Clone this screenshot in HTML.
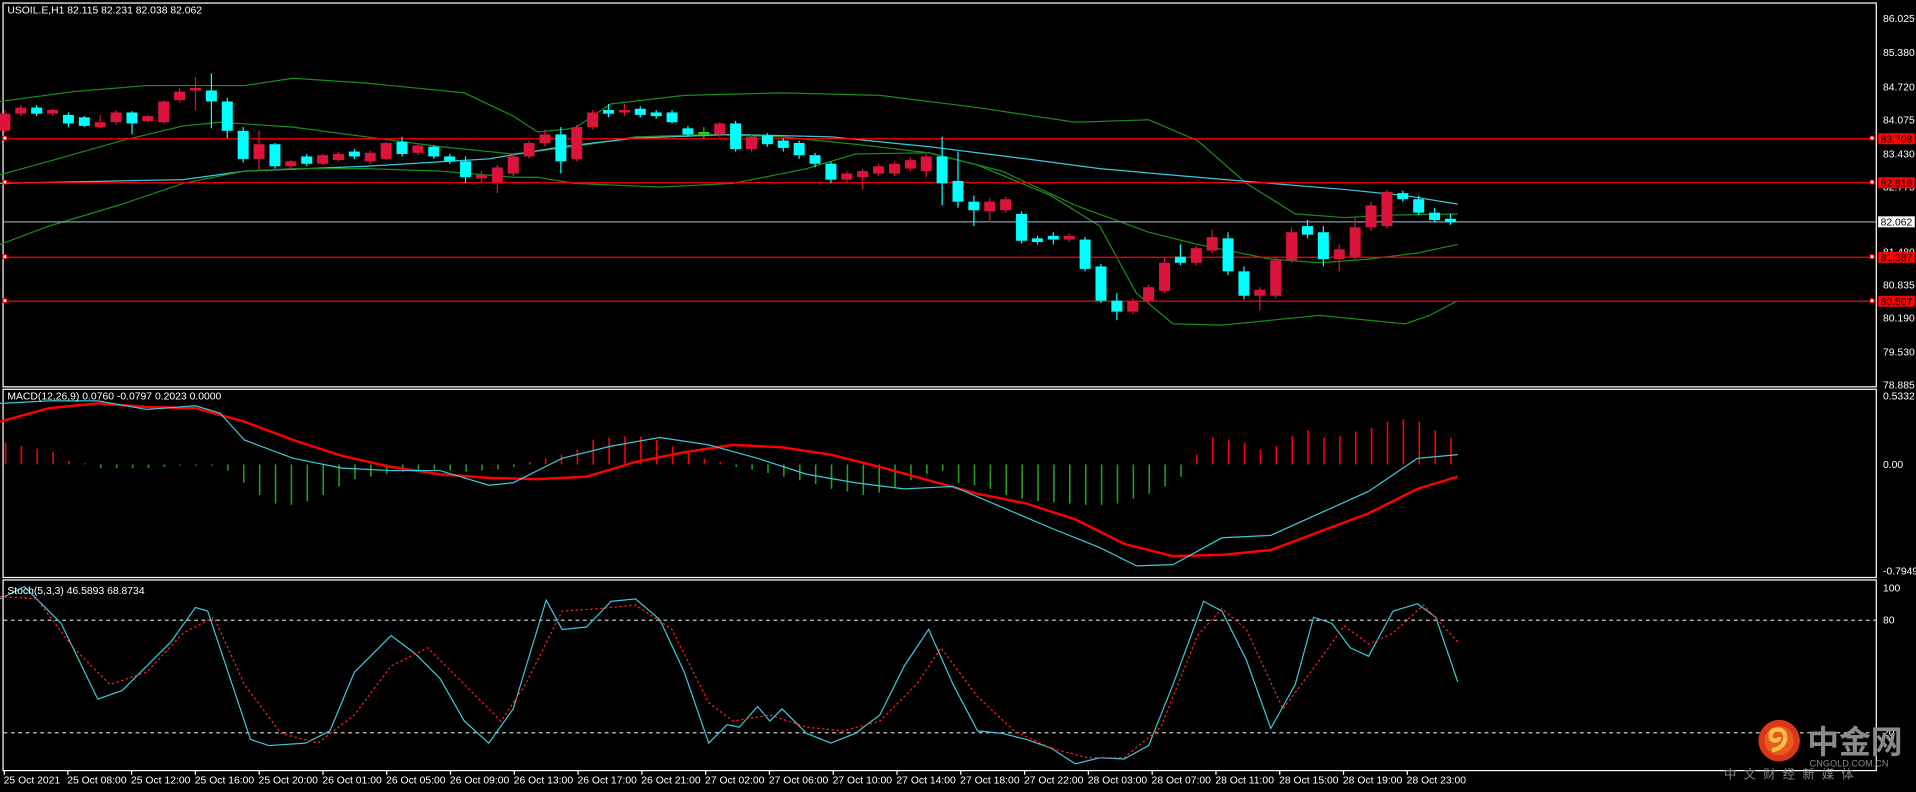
<!DOCTYPE html>
<html><head><meta charset="utf-8"><style>
html,body{margin:0;padding:0;background:#000;overflow:hidden}
svg{display:block}
text{font-family:"Liberation Sans",sans-serif;fill:#fff;font-size:8.5px}
</style></head><body>
<svg id="s" width="1916" height="792" viewBox="0 0 1568 648" preserveAspectRatio="none" xmlns="http://www.w3.org/2000/svg">
<rect width="1568" height="648" fill="#000"/>
<g fill="none" stroke="#fff" stroke-width="1">
<rect x="2.5" y="2.5" width="1533" height="314"/>
<rect x="2.5" y="318.5" width="1533" height="154"/>
<rect x="2.5" y="474.5" width="1533" height="156"/>
</g>
<g id="bands" fill="none" stroke-width="1"></g>
<g id="hl"></g>
<g id="candles"></g>
<g id="macd"></g>
<g id="stoch"></g>
<text x="6" y="11">USOIL.E,H1  82.115 82.231 82.038 82.062</text>
<g>
<text x="1541" y="18">86.025</text><text x="1541" y="46">85.380</text><text x="1541" y="74">84.720</text>
<text x="1541" y="101">84.075</text><text x="1541" y="129">83.430</text><text x="1541" y="156">82.775</text>
<text x="1541" y="183">82.125</text><text x="1541" y="209">81.480</text><text x="1541" y="236">80.835</text>
<text x="1541" y="263">80.190</text><text x="1541" y="291">79.530</text><text x="1541" y="318">78.885</text>
<rect x="1537" y="109" width="30" height="9" fill="#f00"/><text x="1539" y="116.5" style="fill:#000">83.708</text>
<rect x="1537" y="145" width="30" height="9" fill="#f00"/><text x="1539" y="152.5" style="fill:#000">82.816</text>
<rect x="1537" y="177" width="30" height="9" fill="#fff"/><text x="1539" y="184.5" style="fill:#000">82.062</text>
<rect x="1537" y="206" width="30" height="9" fill="#f00"/><text x="1539" y="213.5" style="fill:#000">81.387</text>
<rect x="1537" y="242" width="30" height="9" fill="#f00"/><text x="1539" y="249.5" style="fill:#000">80.507</text>
<text x="6" y="327">MACD(12,26,9) 0.0760 -0.0797 0.2023 0.0000</text>
<text x="1541" y="327">0.5332</text><text x="1541" y="383">0.00</text><text x="1541" y="470">-0.7949</text>
<text x="6" y="486">Stoch(5,3,3) 46.5893 68.8734</text>
<text x="1541" y="484">100</text><text x="1541" y="510">80</text><text x="1541" y="602">20</text>
</g>
<g id="time"></g>
<g>
<circle cx="1456" cy="606" r="17" fill="#d9361a"/>
<circle cx="1456" cy="606" r="12" fill="#e85a1e"/>
<path d="M1450 614 q10 -2 11 -10 q0 -7 -6 -7 q-6 0 -6 5 q0 4 4 4 q3 0 3 -3" fill="none" stroke="#f5c04a" stroke-width="3.5"/>
<text x="1479" y="616" style="font-family:'Noto Sans CJK SC',sans-serif;font-size:26px;font-weight:bold;fill:#8a8a8a">中金网</text>
<text x="1481" y="627" style="font-size:7.5px;fill:#8a8a8a">CNGOLD.COM.CN</text>
<text x="1411" y="637" style="font-family:'Noto Sans CJK SC',sans-serif;font-size:10px;fill:#8a8a8a;letter-spacing:6px">中文财经新媒体</text>
</g>
</svg>
<script>
var NS="http://www.w3.org/2000/svg";
function el(p,t,a){var e=document.createElementNS(NS,t);for(var k in a)e.setAttribute(k,a[k]);document.getElementById(p).appendChild(e);return e;}
function pl(p,pts,c,extra){var a={points:pts.map(function(q){return q.join(',')}).join(' '),fill:'none',stroke:c,'stroke-width':1};for(var k in extra)a[k]=extra[k];el(p,'polyline',a);}
// bands
pl('bands',[[0,83],[60,75],[120,70],[200,70],[240,64],[300,68],[380,76],[420,95],[440,108],[470,105],[500,85],[560,78],[640,76],[720,78],[800,88],[880,100],[940,98],[980,115],[1020,150],[1060,175],[1100,178],[1140,176],[1193,175]],'#1a8c1a');
pl('bands',[[0,143],[40,132],[100,115],[150,103],[180,100],[240,104],[300,112],[360,120],[420,126],[470,120],[520,112],[580,110],[640,112],[700,118],[760,125],[820,140],[880,168],[940,190],[980,200],[1040,212],[1080,215],[1120,212],[1160,207],[1193,200]],'#1a8c1a');
pl('bands',[[0,150],[150,147],[200,140],[300,136],[400,130],[460,120],[520,113],[600,110],[680,112],[760,120],[840,130],[900,138],[980,145],[1040,150],[1100,155],[1150,160],[1193,167]],'#3cc8d8');
pl('bands',[[0,200],[40,185],[100,167],[150,150],[200,140],[240,138],[300,138],[360,140],[420,145],[440,145],[470,150],[540,153],[600,150],[660,138],[700,126],[760,125],[800,135],[860,160],[900,185],[930,240],[960,265],[1000,266],[1080,258],[1120,262],[1150,265],[1170,258],[1193,246]],'#1a8c1a');
// horizontal lines
[[113,'#f00'],[149,'#f00'],[210,'#f00'],[246,'#f00'],[181,'#8899aa']].forEach(function(h){
el('hl','line',{x1:3,x2:1535,y1:h[0]+.5,y2:h[0]+.5,stroke:h[1],'stroke-width':1});
if(h[1]=='#f00'){el('hl','rect',{x:2.5,y:h[0]-1.5,width:3,height:3,fill:'#fff',stroke:'#f00','stroke-width':.8});el('hl','rect',{x:1530.5,y:h[0]-1.5,width:3,height:3,fill:'#fff',stroke:'#f00','stroke-width':.8});}
});
// candles [x,top,bot,wt,wb,c]
var R='#dc143c',C='#00ffff';
var cd=[[4,93,107,90,108,R],[17,88,93,86,95,R],[30,88,93,86,95,C],[43,90,93,89,95,R],[56,94,101,92,104,C],[69,96,103,95,104,C],[82,100,104,94,105,R],[95,92,100,90,102,R],[108,92,101,91,110,C],[121,95,99,94,100,R],[134,83,100,82,101,R],[147,75,82,72,84,R],[160,72,74,63,90,R],[173,74,83,60,105,C],[186,83,107,80,113,C],[199,107,130,104,133,C],[212,118,130,107,139,R],[225,118,136,117,138,C],[238,132,136,131,138,R],[251,128,134,126,136,C],[264,127,134,126,135,R],[277,126,131,124,132,R],[290,124,128,122,130,C],[303,125,132,123,134,R],[316,117,130,116,131,R],[329,116,126,112,128,C],[342,119,125,118,127,R],[355,120,128,119,130,C],[368,128,132,126,134,C],[381,132,145,128,150,C],[394,143,146,140,150,R],[407,137,149,135,158,R],[420,128,142,126,144,R],[433,117,128,115,130,R],[446,110,117,106,120,R],[459,110,132,104,142,C],[472,104,130,102,132,R],[485,92,104,90,106,R],[498,90,93,85,96,C],[511,90,92,85,95,R],[524,89,94,87,96,C],[537,92,95,90,97,C],[550,92,100,90,101,C],[563,105,110,103,112,C],[576,108,110,104,113,'#22cc22'],[589,101,110,100,112,R],[602,101,122,99,124,C],[615,112,122,110,124,R],[628,111,118,109,120,C],[641,115,121,113,124,C],[654,117,127,115,130,C],[667,127,134,125,137,C],[680,134,147,132,150,C],[693,142,147,140,150,R],[706,140,145,138,155,R],[719,136,142,134,144,R],[732,134,142,132,144,R],[745,131,138,129,140,R],[758,128,140,126,145,R],[771,128,150,112,168,C],[784,148,165,124,170,C],[797,165,172,160,185,C],[810,165,173,162,182,R],[823,163,172,161,174,R],[836,175,197,173,199,C],[849,195,198,193,200,C],[862,193,196,190,200,C],[875,193,196,191,198,R],[888,196,220,194,222,C],[901,218,246,216,248,C],[914,246,255,240,262,C],[927,246,255,244,257,R],[940,235,246,233,248,R],[953,215,238,210,240,R],[966,210,215,200,217,C],[979,203,215,201,217,R],[992,194,205,188,207,R],[1005,195,222,190,225,C],[1018,222,242,218,245,C],[1031,237,242,235,254,R],[1044,213,242,211,244,R],[1057,190,213,186,215,R],[1070,185,192,180,195,C],[1083,190,212,185,218,C],[1096,204,212,200,222,R],[1109,186,210,178,212,R],[1122,168,186,165,189,R],[1135,157,185,155,187,R],[1148,158,163,156,165,C],[1161,163,174,160,176,C],[1174,174,180,170,182,C],[1187,179,182,175,184,C]];
cd.forEach(function(c){el('candles','line',{x1:c[0],x2:c[0],y1:c[3],y2:c[4],stroke:c[5],'stroke-width':1});el('candles','rect',{x:c[0]-4.5,y:c[1],width:9,height:Math.max(1,c[2]-c[1]),fill:c[5]});});
// macd histogram
var hv={4:362,17:365,30:367,43:370,56:377,69:379,82:383,95:383,108:383,121:383,134:382,147:381,160:381,173:381,186:385,199:395,212:405,225:412,238:413,251:410,264:405,277:398,290:392,303:390,316:388,329:386,342:385,355:384,368:385,381:386,394:385,407:384,420:382,433:378,446:375,459:372,472:368,485:360,498:358,511:357,524:357,537:360,550:365,563:370,576:375,589:378,602:382,615:384,628:387,641:390,654:393,667:396,680:400,693:402,706:405,719:403,732:399,745:393,758:388,771:385,784:395,797:397,810:400,823:405,836:408,849:410,862:411,875:412,888:413,901:413,914:412,927:408,940:404,953:398,966:390,979:372,992:358,1005:360,1018:362,1031:368,1044:365,1057:357,1070:352,1083:358,1096:357,1109:353,1122:350,1135:345,1148:343,1161:345,1174:352,1187:358};
for(var k in hv){var y=hv[k];el('macd','line',{x1:+k+.5,x2:+k+.5,y1:380,y2:y,stroke:y<380?'#ff0000':'#1fa01f','stroke-width':1.3});}
pl('macd',[[0,345],[40,334],[80,330],[120,333],[160,334],[200,345],[240,360],[280,373],[320,382],[360,388],[400,391],[440,392],[480,390],[520,378],[560,370],[600,364],[640,366],[680,372],[720,382],[760,393],[800,404],[840,412],[880,425],[920,445],[960,455],[1000,454],[1040,450],[1080,435],[1120,420],[1160,400],[1193,390]],'#ff0000',{'stroke-width':2});
pl('macd',[[0,330],[40,328],[80,328],[120,335],[160,332],[180,338],[200,360],[240,375],[280,383],[320,385],[360,385],[400,397],[420,395],[460,375],[500,365],[540,358],[580,364],[620,375],[660,388],[700,395],[740,400],[780,398],[820,415],[860,432],[900,448],[930,463],[960,462],[1000,440],[1040,438],[1080,420],[1120,402],[1160,375],[1193,372]],'#3cc8d8');
// stoch
el('stoch','line',{x1:3,x2:1535,y1:507.5,y2:507.5,stroke:'#ccc','stroke-dasharray':'3,3'});
el('stoch','line',{x1:3,x2:1535,y1:599.5,y2:599.5,stroke:'#ccc','stroke-dasharray':'3,3'});
pl('stoch',[[0,490],[20,480],[50,510],[80,572],[100,565],[140,525],[160,497],[170,500],[190,560],[205,605],[220,610],[250,608],[270,598],[290,550],[320,520],[340,535],[360,555],[380,590],[400,608],[420,580],[447,491],[460,515],[480,513],[500,492],[520,490],[540,507],[560,550],[580,608],[595,593],[605,595],[620,578],[630,590],[640,580],[660,600],[680,608],[700,600],[720,585],[740,545],[760,515],[780,560],[800,598],[820,600],[840,605],[860,612],[880,625],[900,620],[920,621],[940,610],[960,560],[985,492],[1000,500],[1020,540],[1040,596],[1060,560],[1075,505],[1090,510],[1105,530],[1120,537],[1140,500],[1160,494],[1175,505],[1193,558]],'#3cc8d8');
pl('stoch',[[0,488],[30,490],[60,530],[90,560],[120,550],[150,518],[175,505],[200,560],[230,600],[260,608],[290,585],[320,545],[350,530],[380,560],[410,590],[430,560],[460,500],[490,498],[520,495],[550,515],[580,575],[600,590],[630,585],[660,595],[690,598],[720,590],[750,560],[770,530],[800,570],[830,598],[860,612],[890,620],[920,620],[950,595],[980,520],[1000,498],[1020,515],[1050,580],[1080,540],[1100,512],[1120,527],[1140,518],[1165,495],[1193,525]],'#ff2020',{'stroke-dasharray':'2,2'});
// time axis
var lb=["25 Oct 08:00","25 Oct 12:00","25 Oct 16:00","25 Oct 20:00","26 Oct 01:00","26 Oct 05:00","26 Oct 09:00","26 Oct 13:00","26 Oct 17:00","26 Oct 21:00","27 Oct 02:00","27 Oct 06:00","27 Oct 10:00","27 Oct 14:00","27 Oct 18:00","27 Oct 22:00","28 Oct 03:00","28 Oct 07:00","28 Oct 11:00","28 Oct 15:00","28 Oct 19:00","28 Oct 23:00"];
var t=el('time','text',{x:3,y:641});t.textContent="25 Oct 2021";
el('time','line',{x1:3.5,x2:3.5,y1:630,y2:634,stroke:'#fff'});
lb.forEach(function(s,i){var x=55+i*52.2;var e=el('time','text',{x:x,y:641});e.textContent=s;el('time','line',{x1:x+.5,x2:x+.5,y1:630,y2:634,stroke:'#fff'});});
</script>
</body></html>
